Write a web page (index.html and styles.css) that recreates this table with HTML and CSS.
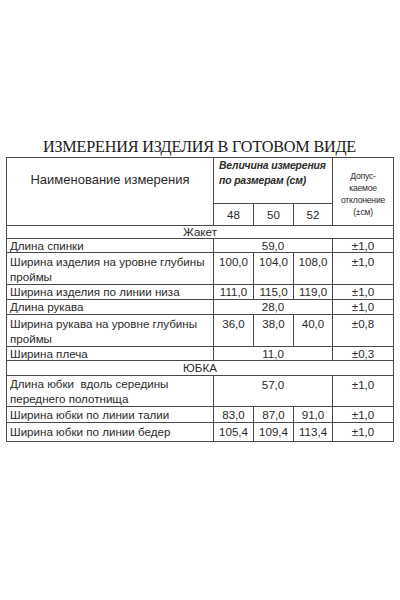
FILE: index.html
```html
<!DOCTYPE html>
<html lang="ru">
<head>
<meta charset="utf-8">
<title>Измерения изделия</title>
<link rel="stylesheet" href="styles.css">
</head>
<body>
<div class="sheet">
  <div class="title">ИЗМЕРЕНИЯ ИЗДЕЛИЯ В ГОТОВОМ ВИДЕ</div>
  <table class="grid">
    <colgroup>
      <col class="c-name"><col class="c-num"><col class="c-num"><col class="c-num3"><col class="c-tol">
    </colgroup>
    <tr class="h1">
      <td class="head-name" rowspan="2">Наименование измерения</td>
      <td class="head-size" colspan="3">Величина измерения<br>по размерам (см)</td>
      <td class="head-tol" rowspan="2">Допус-<br>каемое<br>отклонение<br>(±см)</td>
    </tr>
    <tr class="h2">
      <td class="num">48</td><td class="num">50</td><td class="num">52</td>
    </tr>
    <tr class="r13"><td class="section" colspan="5">Жакет</td></tr>
    <tr class="r14"><td class="name">Длина спинки</td><td class="num" colspan="3">59,0</td><td class="num">±1,0</td></tr>
    <tr class="r30"><td class="name two">Ширина изделия на уровне глубины проймы</td><td class="num top">100,0</td><td class="num top">104,0</td><td class="num top">108,0</td><td class="num top">±1,0</td></tr>
    <tr class="r15"><td class="name">Ширина изделия по линии низа</td><td class="num">111,0</td><td class="num">115,0</td><td class="num">119,0</td><td class="num">±1,0</td></tr>
    <tr class="r15"><td class="name">Длина рукава</td><td class="num" colspan="3">28,0</td><td class="num">±1,0</td></tr>
    <tr class="r30"><td class="name two">Ширина рукава на уровне глубины проймы</td><td class="num top">36,0</td><td class="num top">38,0</td><td class="num top">40,0</td><td class="num top">±0,8</td></tr>
    <tr class="r14"><td class="name">Ширина плеча</td><td class="num" colspan="3">11,0</td><td class="num">±0,3</td></tr>
    <tr class="r15"><td class="section" colspan="5">ЮБКА</td></tr>
    <tr class="r30"><td class="name two tight">Длина юбки&nbsp; вдоль середины переднего полотнища</td><td class="num top" colspan="3">57,0</td><td class="num top">±1,0</td></tr>
    <tr class="r16"><td class="name">Ширина юбки по линии талии</td><td class="num">83,0</td><td class="num">87,0</td><td class="num">91,0</td><td class="num">±1,0</td></tr>
    <tr class="r19"><td class="name">Ширина юбки по линии бедер</td><td class="num">105,4</td><td class="num">109,4</td><td class="num">113,4</td><td class="num">±1,0</td></tr>
  </table>
</div>
</body>
</html>
```

FILE: styles.css
```css
html, body {
  margin: 0;
  padding: 0;
  background: #ffffff;
}
body {
  width: 400px;
  height: 600px;
  overflow: hidden;
}
.sheet {
  padding-top: 138px;
  padding-left: 6px;
}
.title {
  width: 387px;
  text-align: center;
  font-family: "Liberation Serif", "Times New Roman", serif;
  font-size: 16.2px;
  line-height: 19px;
  color: #1a1a1a;
  letter-spacing: -0.2px;
}
.grid {
  border-collapse: collapse;
  table-layout: fixed;
  width: 387px;
  font-family: "Liberation Sans", Arial, sans-serif;
  font-size: 11.6px;
  color: #2a2a2a;
}
.c-name { width: 207px; }
.c-num { width: 40px; }
.c-num3 { width: 39px; }
.c-tol { width: 61px; }
.grid td {
  border: 1px solid #4a4a4a;
  padding: 0 3px;
  line-height: 12px;
  vertical-align: middle;
  overflow: hidden;
  white-space: nowrap;
}
.h1 { height: 46px; }
.h2 { height: 22px; }
.r13 { height: 13px; }
.r14 { height: 14px; }
.r15 { height: 15px; }
.r16 { height: 16px; }
.r19 { height: 19px; }
.r30 { height: 30px; }
.grid td.head-name {
  text-align: center;
  font-size: 13px;
  line-height: 16px;
  vertical-align: top;
  padding-top: 14px;
}
.grid td.head-size {
  font-weight: bold;
  font-style: italic;
  font-size: 10.4px;
  line-height: 15px;
  vertical-align: top;
  padding-top: 0;
  padding-left: 5px;
  letter-spacing: -0.15px;
}
.grid td.head-tol {
  text-align: center;
  font-family: "Liberation Sans Narrow", "Liberation Sans", Arial, sans-serif;
  font-size: 8.6px;
  line-height: 12px;
  vertical-align: top;
  padding-top: 12px;
  letter-spacing: -0.2px;
}
.grid td.section {
  text-align: center;
}
.grid td.name {
  text-align: left;
}
.grid td.name.two {
  white-space: normal;
  line-height: 15px;
  vertical-align: top;
  padding-top: 1px;
}
.grid td.name.two.tight {
  padding-top: 0;
}
.grid td.num {
  text-align: center;
}
.grid td.num.top {
  vertical-align: top;
  padding-top: 3px;
}
```
